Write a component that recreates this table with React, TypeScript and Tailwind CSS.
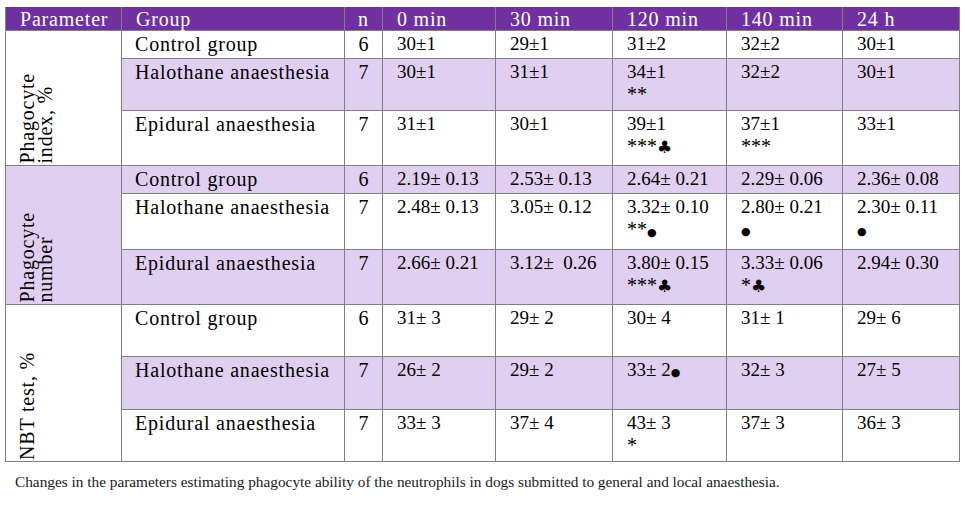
import React from "react";

type Val = { v: string; m?: string; inl?: string };
type Row = { g: string; n: string; vals: Val[] };
type Block = { p: React.ReactNode; shade: boolean; rows: Row[] };

const blocks: Block[] = [
  {
    p: (
      <>
        Phagocyte
        <br />
        index, %
      </>
    ),
    shade: false,
    rows: [
      { g: "Control group", n: "6", vals: [{ v: "30±1" }, { v: "29±1" }, { v: "31±2" }, { v: "32±2" }, { v: "30±1" }] },
      { g: "Halothane anaesthesia", n: "7", vals: [{ v: "30±1" }, { v: "31±1" }, { v: "34±1", m: "**" }, { v: "32±2" }, { v: "30±1" }] },
      { g: "Epidural anaesthesia", n: "7", vals: [{ v: "31±1" }, { v: "30±1" }, { v: "39±1", m: "***♣" }, { v: "37±1", m: "***" }, { v: "33±1" }] },
    ],
  },
  {
    p: (
      <>
        Phagocyte
        <br />
        number
      </>
    ),
    shade: true,
    rows: [
      { g: "Control group", n: "6", vals: [{ v: "2.19± 0.13" }, { v: "2.53± 0.13" }, { v: "2.64± 0.21" }, { v: "2.29± 0.06" }, { v: "2.36± 0.08" }] },
      { g: "Halothane anaesthesia", n: "7", vals: [{ v: "2.48± 0.13" }, { v: "3.05± 0.12" }, { v: "3.32± 0.10", m: "**●" }, { v: "2.80± 0.21", m: "●" }, { v: "2.30± 0.11", m: "●" }] },
      { g: "Epidural anaesthesia", n: "7", vals: [{ v: "2.66± 0.21" }, { v: "3.12±\u00a0 0.26" }, { v: "3.80± 0.15", m: "***♣" }, { v: "3.33± 0.06", m: "*♣" }, { v: "2.94± 0.30" }] },
    ],
  },
  {
    p: <>NBT test, %</>,
    shade: false,
    rows: [
      { g: "Control group", n: "6", vals: [{ v: "31± 3" }, { v: "29± 2" }, { v: "30± 4" }, { v: "31± 1" }, { v: "29± 6" }] },
      { g: "Halothane anaesthesia", n: "7", vals: [{ v: "26± 2" }, { v: "29± 2" }, { v: "33± 2", inl: "●" }, { v: "32± 3" }, { v: "27± 5" }] },
      { g: "Epidural anaesthesia", n: "7", vals: [{ v: "33± 3" }, { v: "37± 4" }, { v: "43± 3", m: "*" }, { v: "37± 3" }, { v: "36± 3" }] },
    ],
  },
];

function Sym({ c }: { c: string }) {
  if (c === "♣")
    return <span className="[font-family:'DejaVu_Sans',sans-serif] text-[17px] leading-none">♣</span>;
  if (c === "●")
    return <span className="[font-family:'DejaVu_Sans',sans-serif] text-[11px] leading-none">●</span>;
  return <span className="text-[20px]">{c}</span>;
}

function Marks({ m }: { m: string }) {
  return (
    <div className="leading-[22px]">
      {Array.from(m).map((c, i) => (
        <Sym key={i} c={c} />
      ))}
    </div>
  );
}

const cell = "border-r border-b border-[#808080]";

export default function App() {
  const headers = ["Parameter", "Group", "n", "0 min", "30 min", "120 min", "140 min", "24 h"];
  return (
    <div className="bg-white w-[965px] h-[512px] pt-[7px] pl-[5px] [font-family:'Liberation_Serif',serif] text-black">
      <div className="grid w-fit border-l border-[#808080] grid-cols-[116px_223px_38px_113px_117px_114px_116px_117px] grid-rows-[24px_28px_52px_55px_28px_56px_55px_52px_53px_52px]">
        {headers.map((h, i) => (
          <div
            key={h}
            className={`${cell} bg-[#7030a0] text-white text-[20px] leading-[22px] tracking-[0.8px] pt-[1px] ${
              i === 2 ? "text-center" : "pl-[14px]"
            }`}
          >
            {h}
          </div>
        ))}
        {blocks.map((b, bi) => (
          <React.Fragment key={bi}>
            <div className={`${cell} row-span-3 flex items-end pl-[12px] pb-[1px] ${b.shade ? "bg-[#e1cff1]" : "bg-white"}`}>
              <div className="[writing-mode:vertical-rl] rotate-180 h-fit text-[20px] leading-[18px] tracking-[0.8px] whitespace-nowrap">
                {b.p}
              </div>
            </div>
            {b.rows.map((r, ri) => {
              const shaded = b.shade ? ri !== 1 : ri === 1;
              const bg = shaded ? "bg-[#e1cff1]" : "bg-white";
              return (
                <React.Fragment key={ri}>
                  <div className={`${cell} ${bg} pl-[13px] pt-[2px] text-[20px] leading-[22px] tracking-[0.8px] whitespace-nowrap`}>
                    {r.g}
                  </div>
                  <div className={`${cell} ${bg} pt-[2px] text-center text-[20px] leading-[22px]`}>{r.n}</div>
                  {r.vals.map((v, vi) => (
                    <div key={vi} className={`${cell} ${bg} pl-[14px] pt-[2px] text-[19px] leading-[22px] whitespace-pre`}>
                      <div>
                        {v.v}
                        {v.inl ? <Sym c={v.inl} /> : null}
                      </div>
                      {v.m ? <Marks m={v.m} /> : null}
                    </div>
                  ))}
                </React.Fragment>
              );
            })}
          </React.Fragment>
        ))}
      </div>
      <p className="mt-[10px] ml-[10px] text-[15.3px] leading-[20px] text-[#1a1a1a]">
        Changes in the parameters estimating phagocyte ability of the neutrophils in dogs submitted to general and local anaesthesia.
      </p>
    </div>
  );
}
